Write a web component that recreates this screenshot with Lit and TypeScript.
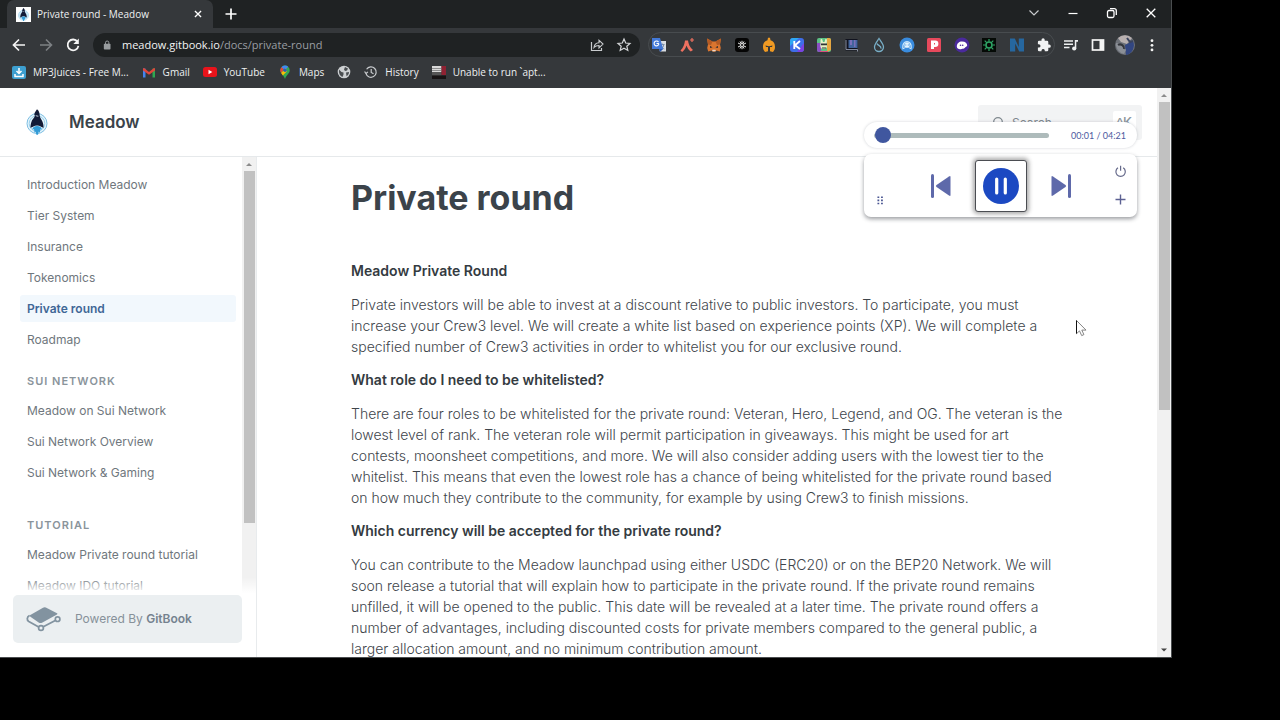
import { LitElement, html, css, svg, TemplateResult } from "lit";
import { customElement, property, state } from "lit/decorators.js";
import { classMap } from "lit/directives/class-map.js";

const reset = css`
  * { box-sizing: border-box; }
  button { appearance: none; border: 0; padding: 0; margin: 0; background: none; color: inherit; font: inherit; display: grid; place-items: center; cursor: pointer; }
  a { color: inherit; text-decoration: none; }
  svg { display: block; flex: none; }
  ul { list-style: none; margin: 0; padding: 0; }
`;

const penguin = (size: number) => html`<svg width=${size} height=${size} viewBox="0 0 26 26" aria-hidden="true">
  <circle cx="13" cy="14.5" r="10" fill="#e3f3fb" stroke="#7dbfe3" stroke-width="1"/>
  <circle cx="13" cy="14.5" r="7.8" fill="none" stroke="#9bd0ec" stroke-width="1"/>
  <path d="M13 .2c-.8 1-1.600 2.200-2.400 3.700L10.300 6l.7.6C10.400 9 8 10.600 7.300 13.200c-.6 2.100-.9 4.300-.9 5.600 2.200-.4 3.600-2.400 6.700-2.400 3 0 4.300 2 6.400 2.400.2-2-.3-4-.9-5.800-.7-2-2.500-3.700-2.900-6.300 0-2.300-.5-5-2.700-6.500z" fill="#121a36"/>
  <path d="M11.200 6.700c1.500-.5 2.500-.4 3.700.2l-.9.5c-1 .1-1.800 0-2.800-.7z" fill="#dfeef7"/>
  <path d="M8.300 20.500c.3-2.300 2-3.600 4.800-3.600s4.400 1.300 4.800 3.600l-1.500-.3-.7 3.500-1-1.200-.7 3.300h-1.600l-.7-3.300-1 1.200-.7-3.500z" fill="#329bd6"/>
</svg>`;

const icon = (body: TemplateResult, size = 16, box = 16) =>
  html`<svg width=${size} height=${size} viewBox="0 0 ${box} ${box}" fill="none" aria-hidden="true">${body}</svg>`;

const extensions: { name: string; art: TemplateResult }[] = [
  { name: "Translate", art: svg`<path d="M5.500 4H15v10.500H9z" fill="#d9dde3"/><path d="M9 7.500h4.500M11.300 6.500v1M10 12c1.700-1 2.500-2.500 2.700-4.300M10.300 9c.7 1.500 1.500 2.300 3 3" stroke="#7b8ea8"/><path d="M1 1h8l3.200 11H1z" fill="#4379d8"/><path d="M7.900 6.500H5.500M7.500 5.100a2.400 2.400 0 1 0 .4 1.600" stroke="#fff" stroke-width="1.100"/><path d="M8 12l1 3 3.200-3z" fill="#2757b0"/>` },
  { name: "Argent", art: svg`<path d="M1.500 13.500C4.500 10.700 5.500 7 6 3.500h3c.4 3.500 2 7 5 9.500l-2.200 1.500C9.500 13 8.200 10.500 7.500 8.500 6.800 11 5.500 13 3.200 15z" fill="#ef7160"/><path d="M13 1v4M11 3h4" stroke="#ef7160" stroke-width="1.200"/>` },
  { name: "MetaMask", art: svg`<path d="M1 1.500l5.500 3h3l5.500-3-1 6 .8 3.500-1 3.500-3.300-1-1.500 1.300H7l-1.500-1.300-3.300 1-1-3.500L2 7.500z" fill="#d9752f"/><path d="M1 1.500l5.500 3L5 8 2 7.500zM15 1.500l-5.500 3L11 8l3-.5z" fill="#b25a24"/><path d="M4 9l2.500 1.200L4.200 11zM12 9l-2.500 1.200 2.300.8z" fill="#1e2430"/><path d="M6.500 12.700h3l.3 1.500H6.200z" fill="#e8d9cd"/>` },
  { name: "Kraken", art: svg`<rect x="1" y="1" width="14" height="14" rx="3" fill="#050505"/><path d="M8 3.800v8.400M4 6l8 4M4 10l8-4M6 4.500l4 7M10 4.500l-4 7" stroke="#e9e9e9" stroke-width="1"/><circle cx="8" cy="8" r="1.500" fill="#050505" stroke="#eee" stroke-width=".8"/>` },
  { name: "Spartan", art: svg`<path d="M7 .8h2l.5 2.400C12.800 4 14 7 14 10c0 2-.7 3.500-2 5l-3-.8V10h2l.5-1.500-3.500.8-3.500-.8L5 10h2v4.200L4 15c-1.300-1.500-2-3-2-5 0-3 1.200-6 4.500-6.800z" fill="#f09a23"/>` },
  { name: "Keplr", art: svg`<rect x="1" y="1" width="14" height="14" rx="3" fill="#3f6de8"/><path d="M8 15h4a3 3 0 0 0 3-3V6z" fill="#7c42e0"/><path d="M1 4a3 3 0 0 1 3-3h6L1 9z" fill="#2fa8f4"/><path d="M5.300 4v8M11 4L6 8.200 11 12" stroke="#fff" stroke-width="1.900"/>` },
  { name: "Rabby", art: svg`<rect x="1" y="1" width="14" height="14" rx="2" fill="#5cc184"/><path d="M1 6h4v9H3a2 2 0 0 1-2-2z" fill="#8a4fc4"/><path d="M11 1h2a2 2 0 0 1 2 2v10l-4 2z" fill="#e6a742"/><path d="M4.500 2.500l1.500-.8 1 3.300h1.500l1-3.300 1.500.8-.3 4.500c1 3-.5 5-3 5s-4-2-3.200-5z" fill="#e7f0c8"/><path d="M5 6.500h6v1.800H5zM6 10.500h4v1H6z" fill="#2e3534"/><path d="M4 14h8v1H4z" fill="#dd4e7c"/>` },
  { name: "Wallet", art: svg`<path d="M1.500 2h12v11.500h-12z" fill="#11131f"/><path d="M4.500 3h9v8h-9z" fill="#42649c"/><path d="M6 3h2v5H6zM10 3h1.500v7H10z" fill="#7a6fb8"/><path d="M2 3v9.500h11.500v2" stroke="#a2a9bd" stroke-width=".8"/>` },
  { name: "Sui", art: svg`<path d="M8 1.500C6 4.500 3.500 7 3.500 10a4.500 4.500 0 0 0 9 0C12.500 7 10 4.500 8 1.500z" stroke="#78aec6" stroke-width="1.300"/><path d="M6 6.500c.5 2.200 4.500 1.800 4 5.200" stroke="#78aec6" stroke-width="1.300"/>` },
  { name: "Martian", art: svg`<circle cx="8" cy="8" r="7.500" fill="#398bdd"/><path d="M3.800 11.500C2.500 2.500 13.500 2.500 12.200 11.500" stroke="#c9e6fb" stroke-width="1.300"/><path d="M5.300 8.500c0-4 5.400-4 5.400 0 0 2-1.200 2.300-2.700 2.300s-2.700-.3-2.700-2.300z" fill="#e3f4ff"/><path d="M6.300 8h1M8.800 8h1" stroke="#398bdd"/><path d="M3.500 12l2.500-1.300M12.500 12L10 10.700" stroke="#c9e6fb"/>` },
  { name: "Pontem", art: svg`<rect x="1" y="1" width="14" height="14" rx="1.500" fill="#e6495c"/><path d="M5 3.500h4.200a3.200 3.200 0 0 1 0 6.400H8V12H5zM8 6v1.500h1V6z" fill="#fff" fill-rule="evenodd"/>` },
  { name: "Phantom", art: svg`<circle cx="8" cy="8" r="7.500" fill="#4a2a9c"/><path d="M2.800 9.500c0-3 2.200-5 5.200-5 3.500 0 5.200 2 5.200 4-.3 1.500-1.700 1.300-2.500 2.500-1 1.300-2.400.3-3 .9-1.800.8-4.900.2-4.900-2.400z" fill="#fff"/><circle cx="6.500" cy="8.200" r=".8" fill="#4a2a9c"/><circle cx="8.700" cy="8.200" r=".8" fill="#4a2a9c"/>` },
  { name: "Virus", art: svg`<path d="M1 1h14v14H1z" fill="#050a06"/><circle cx="8" cy="8" r="3" stroke="#2fa566" stroke-width="1.600"/><path d="M8 2v2.500M8 11.500V14M2 8h2.500M11.500 8H14M3.700 3.700l2 2M10.300 10.300l2 2M12.300 3.700l-2 2M5.700 10.300l-2 2" stroke="#2fa566" stroke-width="1.200"/>` },
  { name: "Nami", art: svg`<path d="M1 1.500h4.800l4 8.500V1.500H15v13h-4.800L6.200 6.500v8H1z" fill="#26679f"/>` },
  { name: "Extensions", art: svg`<path d="M13.200 7.600h-.9V5a1.300 1.300 0 0 0-1.300-1.300H8.700v-.9a1.600 1.600 0 0 0-3.200 0v.9H3.200A1.300 1.300 0 0 0 1.900 5v2.200h.9a1.700 1.700 0 0 1 0 3.400h-.9V13a1.300 1.300 0 0 0 1.300 1.300h2.300v-.9a1.700 1.700 0 0 1 3.300 0v.9H11a1.300 1.300 0 0 0 1.300-1.300v-2.200h.9a1.600 1.600 0 0 0 0-3.200z" fill="#f1f2f3"/>` },
];

@customElement("browser-chrome")
class BrowserChrome extends LitElement {
  static styles = [reset, css`
    :host { display: block; color: #eef0f1; background: #35383b; font-family: "Open Sans", "Noto Sans", sans-serif; }
    .tabs { display: flex; align-items: stretch; height: 28px; background: #1f2223; padding-left: 7px; }
    .tab { display: flex; align-items: center; width: 206px; padding: 0 8px 0 9px; gap: 6px; border-radius: 7px 7px 0 0; background: #35383b; font-size: 10px; }
    .favicon { display: grid; place-items: center; width: 15px; height: 15px; background: #fff; }
    .tab-title { flex: 1; white-space: nowrap; overflow: hidden; }
    .new-tab { width: 36px; }
    .window-controls { display: flex; margin-left: auto; padding-right: 1px; }
    .window-controls button { width: 39px; height: 25px; }
    .toolbar { display: flex; align-items: center; height: 33px; padding: 0 6px 0 5px; }
    .tool { width: 27px; height: 24px; }
    .omnibox { flex: 1; min-width: 0; display: flex; align-items: center; gap: 9px; height: 24px; margin: 0 8px 0 7px; padding: 0 7px 0 10px; border-radius: 12px; background: #1f2223; }
    .url { flex: 1; font-size: 11px; color: #9a9ea2; white-space: nowrap; overflow: hidden; }
    .host { color: #f3f4f4; font-weight: 500; }
    .omnibox button { width: 18px; }
    .extensions { display: flex; align-items: center; justify-content: space-between; width: 407px; height: 25px; margin-right: 2px; padding: 0 2px; border: 1px solid #484c4f; border-radius: 13px; }
    .bookmarks { display: flex; align-items: center; gap: 13px; height: 27px; padding: 0 0 5px 12px; font-size: 10px; }
    .bookmark { display: flex; align-items: center; gap: 7px; white-space: nowrap; }
  `];

  private bookmarks = [
    { text: "MP3Juices - Free M...", art: svg`<rect x="0" y="1" width="14" height="13" rx="2" fill="#3d9fd0"/><path d="M7 3v5M4.500 6L7 8.500 9.500 6M3 9v2.500h8V9" stroke="#fff" stroke-width="1.500"/>` },
    { text: "Gmail", art: svg`<path d="M1 12.500V3.500h2.500v9z" fill="#4583ed"/><path d="M10.500 12.500v-9H13v9z" fill="#2fa751"/><path d="M1 3.500l1-.5 5 4 5-4 1 .5v2L7 9.700 1 5.500z" fill="#e2453a"/>` },
    { text: "YouTube", art: svg`<rect x="0" y="2" width="14" height="10" rx="2.500" fill="#e8131b"/><path d="M5.500 4.800v4.400L9.300 7z" fill="#fff"/>` },
    { text: "Maps", art: svg`<path d="M7 .5a4.700 4.700 0 0 0-4.700 4.700C2.300 8.500 5.500 9.500 7 14c1.500-4.500 4.700-5.500 4.700-8.800A4.700 4.700 0 0 0 7 .5z" fill="#34a853"/><path d="M3.400 2.200L7 5.200l3.200-3.500A4.700 4.700 0 0 0 3.400 2.200z" fill="#4285f4"/><path d="M3.400 2.200L5.700 4.200 3.200 7.900A4.800 4.800 0 0 1 3.400 2.200z" fill="#ea4335"/><path d="M3.200 7.900l4.600-4.800 1 3.500-4 4z" fill="#fbbc04"/><circle cx="7" cy="5.200" r="1.700" fill="#2c5fb3"/>` },
    { text: "", art: svg`<circle cx="7" cy="7" r="6.300" fill="#cdd0d2"/><path d="M2 4.500l2.500 2.500 2 .5v2L5.500 12C3 11 1.500 8.500 2 4.500zM8 2l3 1.500-1 2-2 .5-1-1.500zM9 7.500l3-.5c0 2-1 3.500-2.500 4.300z" fill="#4a4e51"/>` },
    { text: "History", art: svg`<path d="M2.600 4.300A5.200 5.200 0 1 1 2 8.600M.6 6.500L2 8.500l1.900-1.600M7.200 4v3.400l2.300 1.400" stroke="#c9cccf" stroke-width="1.200"/>` },
    { text: "Unable to run `apt...", art: svg`<path d="M0 1h9.500v6H0z" fill="#d8d8d8"/><path d="M0 3h9.500v1H0zM0 5h9.500v1H0z" fill="#8d8d8d"/><path d="M0 7h9.500v3.500H0z" fill="#555"/><path d="M9.500 1H14v9H9.500z" fill="#8f2233"/><path d="M0 10.500h14V14H0z" fill="#171314"/>` },
  ];

  render() {
    return html`
      <div class="tabs">
        <div class="tab">
          <span class="favicon">${penguin(13)}</span>
          <span class="tab-title">Private round - Meadow</span>
          <button aria-label="Close tab">${icon(svg`<path d="M4.500 4.500l7 7M11.500 4.500l-7 7" stroke="#fff" stroke-width="1.500"/>`, 14)}</button>
        </div>
        <button class="new-tab" aria-label="New tab">${icon(svg`<path d="M8 2.500v11M2.500 8h11" stroke="#fff" stroke-width="1.700"/>`)}</button>
        <div class="window-controls">
          <button aria-label="Search tabs">${icon(svg`<path d="M3.500 5.500L8 10l4.500-4.500" stroke="#c8cbcd" stroke-width="1.200"/>`)}</button>
          <button aria-label="Minimize">${icon(svg`<path d="M3.500 8.500h9" stroke="#fff" stroke-width="1.200"/>`)}</button>
          <button aria-label="Restore">${icon(svg`<rect x="3.500" y="5.500" width="6.500" height="7" rx="1.500" stroke="#fff" stroke-width="1.300"/><path d="M6 3.700h4.300a2 2 0 0 1 2 2V10" stroke="#fff" stroke-width="1.300"/>`)}</button>
          <button aria-label="Close">${icon(svg`<path d="M3.700 3.700l8.600 8.600M12.300 3.700l-8.600 8.600" stroke="#fff" stroke-width="1.300"/>`)}</button>
        </div>
      </div>
      <div class="toolbar">
        <button class="tool" aria-label="Back">${icon(svg`<path d="M14 8H3M8 2.500L2.500 8 8 13.500" stroke="#f5f5f5" stroke-width="1.700"/>`)}</button>
        <button class="tool" aria-label="Forward">${icon(svg`<path d="M2 8h11M8 2.500L13.500 8 8 13.500" stroke="#7d8184" stroke-width="1.600"/>`)}</button>
        <button class="tool" aria-label="Reload">${icon(svg`<path d="M12.500 4.800A5.400 5.400 0 1 0 13.400 8.800" stroke="#f5f5f5" stroke-width="1.800"/><path d="M13.800 1.500v5.500H8.300z" fill="#f5f5f5"/>`)}</button>
        <div class="omnibox">
          ${icon(svg`<rect x="1" y="4.500" width="8" height="7" rx="1" fill="#989c9f"/><path d="M3 5V3.200a2 2 0 0 1 4 0V5" stroke="#989c9f" stroke-width="1.200"/>`, 10, 12)}
          <span class="url"><span class="host">meadow.gitbook.io</span>/docs/private-round</span>
          <button aria-label="Share">${icon(svg`<path d="M2.500 5v8.500h10V11" stroke="#c9ccce" stroke-width="1.200"/><path d="M5 10.500c.3-3 2-4.700 5-4.800V3.200l4 3.900-4 3.800V8.500c-2.200 0-3.700.5-5 2z" stroke="#c9ccce" stroke-width="1.100"/>`)}</button>
          <button aria-label="Bookmark this page">${icon(svg`<path d="M8 2l1.700 4 4.300.4-3.200 2.800 1 4.200L8 11.200l-3.800 2.200 1-4.200L2 6.400 6.300 6z" stroke="#d5d7d9" stroke-width="1.200"/>`)}</button>
        </div>
        <div class="extensions">
          ${extensions.map((e) => html`<button aria-label=${e.name}>${icon(e.art)}</button>`)}
        </div>
        <button class="tool" aria-label="Media">${icon(svg`<path d="M1 4h9M1 7.300h9M1 10.600h5.500" stroke="#eef0f1" stroke-width="1.500"/><path d="M11.800 3H15v1.800h-1.700v6.700h-1.500z" fill="#eef0f1"/><circle cx="11.200" cy="11.500" r="2.100" fill="#eef0f1"/>`)}</button>
        <button class="tool" aria-label="Side panel">${icon(svg`<rect x="2.500" y="3" width="11" height="10" stroke="#f5f5f5" stroke-width="1.700"/><path d="M9.500 3h4v10h-4z" fill="#f5f5f5"/>`)}</button>
        <button class="tool" aria-label="Profile">${icon(svg`<circle cx="10" cy="10" r="10" fill="#6d7178"/><path d="M3 3a10 10 0 0 1 14 0l-5 6-6-2z" fill="#b8b0b0"/><path d="M10 10l8-4a10 10 0 0 1-7 14z" fill="#324681"/><path d="M1 8l6 1 4 6-2 4A10 10 0 0 1 1 8z" fill="#8b8f96"/><path d="M3 10a4 4 0 0 1 6 4" stroke="#33363c" stroke-width="2"/><path d="M12 3l3 4 3-1" stroke="#39435e" stroke-width="2"/>`, 20, 20)}</button>
        <button class="tool" aria-label="Menu">${icon(svg`<circle cx="8" cy="3.700" r="1.400" fill="#f5f5f5"/><circle cx="8" cy="8.300" r="1.400" fill="#f5f5f5"/><circle cx="8" cy="12.900" r="1.400" fill="#f5f5f5"/>`)}</button>
      </div>
      <nav class="bookmarks" aria-label="Bookmarks">
        ${this.bookmarks.map((b) => html`<a class="bookmark" href="#" aria-label=${b.text || "Website"}>${icon(b.art, 14, 14)}${b.text ? html`<span>${b.text}</span>` : ""}</a>`)}
      </nav>`;
  }
}

@customElement("scroll-rail")
class ScrollRail extends LitElement {
  @property({ type: Number }) share = 50;
  @property({ type: Boolean }) down = false;
  static styles = [reset, css`
    :host { display: flex; flex-direction: column; align-items: center; width: 14px; flex: none; background: #f1f1f1; }
    .arrow { display: grid; place-items: center; height: 14px; }
    .track { flex: 1; width: 11px; }
    .thumb { background: #c1c1c1; }
  `];
  render() {
    return html`
      <span class="arrow">${icon(svg`<path d="M1 6l3-3 3 3z" fill="#8b8b8b"/>`, 8, 8)}</span>
      <div class="track"><div class="thumb" style="height:${this.share}%"></div></div>
      ${this.down ? html`<span class="arrow">${icon(svg`<path d="M1 2.500l3 3 3-3z" fill="#444"/>`, 8, 8)}</span>` : ""}`;
  }
}

@customElement("docs-sidebar")
class DocsSidebar extends LitElement {
  @state() private current = "Private round";
  static styles = [reset, css`
    :host { position: relative; display: flex; flex-direction: column; width: 257px; flex: none; border-right: 1px solid #e8ebed; color: #6f777d; font-size: 12px; line-height: 18px; }
    .scroller { position: relative; flex: 1; min-height: 0; display: flex; justify-content: space-between; overflow: hidden; }
    .links { padding: 14px 0 0 20px; width: 236px; }
    .link { display: flex; align-items: center; height: 27px; margin-bottom: 4px; padding-left: 7px; border-radius: 3px; }
    .link.active { background: #f2f8fd; color: #3f6796; font-weight: 600; }
    .heading { margin: 0; padding: 16px 0 8px 7px; font-size: 11px; line-height: 16px; font-weight: 600; color: #8a949b; letter-spacing: 1px; text-transform: uppercase; }
    .group + .group + .group { padding-top: 11px; }
    .fade { position: absolute; left: 0; right: 0; bottom: 0; height: 18px; background: linear-gradient(rgba(255,255,255,0), #fff 90%); }
    .powered { display: flex; align-items: center; gap: 14px; height: 48px; margin: 0 14px 14px 13px; padding-left: 13px; border-radius: 5px; background: #ebeff1; color: #87919a; }
    .powered b { font-weight: 600; color: #75828f; }
  `];

  private groups = [
    { heading: "", links: ["Introduction Meadow", "Tier System", "Insurance", "Tokenomics", "Private round", "Roadmap"] },
    { heading: "Sui Network", links: ["Meadow on Sui Network", "Sui Network Overview", "Sui Network & Gaming"] },
    { heading: "Tutorial", links: ["Meadow Private round tutorial", "Meadow IDO tutorial"] },
  ];

  render() {
    return html`
      <div class="scroller">
        <nav class="links" aria-label="Pages">
          ${this.groups.map((g) => html`<div class="group">
            ${g.heading ? html`<h2 class="heading">${g.heading}</h2>` : ""}
            <ul>${g.links.map((l) => html`<li><a href="#" class=${classMap({ link: true, active: l === this.current })} @click=${() => (this.current = l)}>${l}</a></li>`)}</ul>
          </div>`)}
        </nav>
        <scroll-rail share="83"></scroll-rail>
        <div class="fade"></div>
      </div>
      <a class="powered" href="#">
        <svg width="35" height="26" viewBox="0 0 35 26" fill="none" aria-hidden="true">
          <path d="M3 9.800L17 1.700q1.400-.8 2.800-.1L31 7.300q1 .6 0 1.200L16 16.700q-1.500.8-3 0z" fill="#8293a0"/>
          <path d="M3.500 9.500C.8 10.800.6 14.200 2.800 15.500L12.700 21M17.300 20.800l12-6.300" stroke="#8293a0" stroke-width="1.800"/>
          <circle cx="15" cy="22" r="2.400" stroke="#8293a0" stroke-width="1.700"/>
          <circle cx="31.600" cy="13.200" r="2.300" stroke="#8293a0" stroke-width="1.700"/>
        </svg>
        <span>Powered By <b>GitBook</b></span>
      </a>`;
  }
}

@customElement("docs-article")
class DocsArticle extends LitElement {
  static styles = [reset, css`
    :host { display: block; flex: 1; min-width: 0; overflow: hidden; padding: 18px 92px 0 94px; color: #3e454b; }
    .title { margin: 0 0 40px; font-size: 34px; line-height: 46px; font-weight: 700; color: #3b434a; }
    .text { margin: 0 0 13px; font-size: 14px; line-height: 21px; font-weight: 300; }
    .lead { margin: 0 0 13px; font-size: 14px; line-height: 20px; font-weight: 600; color: #343b41; }
  `];

  private sections = [
    ["Meadow Private Round", "Private investors will be able to invest at a discount relative to public investors. To participate, you must increase your Crew3 level. We will create a white list based on experience points (XP). We will complete a specified number of Crew3 activities in order to whitelist you for our exclusive round."],
    ["What role do I need to be whitelisted?", "There are four roles to be whitelisted for the private round: Veteran, Hero, Legend, and OG. The veteran is the lowest level of rank. The veteran role will permit participation in giveaways. This might be used for art contests, moonsheet competitions, and more. We will also consider adding users with the lowest tier to the whitelist. This means that even the lowest role has a chance of being whitelisted for the private round based on how much they contribute to the community, for example by using Crew3 to finish missions."],
    ["Which currency will be accepted for the private round?", "You can contribute to the Meadow launchpad using either USDC (ERC20) or on the BEP20 Network. We will soon release a tutorial that will explain how to participate in the private round. If the private round remains unfilled, it will be opened to the public. This date will be revealed at a later time. The private round offers a number of advantages, including discounted costs for private members compared to the general public, a larger allocation amount, and no minimum contribution amount."],
  ];

  render() {
    return html`<article>
      <h1 class="title">Private round</h1>
      ${this.sections.map(([lead, text]) => html`<h2 class="lead">${lead}</h2><p class="text">${text}</p>`)}
    </article>`;
  }
}

@customElement("music-widget")
class MusicWidget extends LitElement {
  static styles = [reset, css`
    :host { display: flex; flex-direction: column; gap: 6px; width: 273px; color: #4d5aa0; }
    .seek { display: flex; align-items: center; justify-content: space-between; height: 26px; padding: 0 11px 0 10px; border-radius: 13px; background: #fff; box-shadow: 0 0 3px rgba(40,50,70,.22); font-family: Lato, sans-serif; font-size: 9px; }
    .bar { appearance: none; width: 175px; height: 18px; margin: 0; background: none; }
    .bar::-webkit-slider-runnable-track { height: 5px; border-radius: 3px; background: #aebbbb; }
    .bar::-webkit-slider-thumb { appearance: none; width: 16px; height: 16px; margin-top: -6px; border-radius: 50%; background: #40579f; }
    .deck { display: grid; grid-template-columns: 34px 1fr 34px; height: 63px; border-radius: 7px; background: #fff; box-shadow: 0 2px 4px rgba(30,35,45,.45); }
    .grip { align-self: end; justify-self: center; margin-bottom: 12px; }
    .main { display: flex; align-items: center; justify-content: center; gap: 22px; }
    .play { width: 52px; height: 52px; border: 1px solid #4b4d52; border-radius: 3px; background: #fff; box-shadow: 0 0 4px 2px rgba(40,40,40,.4); }
    .side { display: flex; flex-direction: column; justify-content: space-around; align-items: center; padding: 4px 0; }
  `];
  render() {
    return html`
      <div class="seek">
        <input class="bar" type="range" min="0" max="261" value="1" aria-label="Position" />
        <span>00:01 / 04:21</span>
      </div>
      <div class="deck">
        <button class="grip" aria-label="Move">${icon(svg`<path d="M1.500 .5v9M5.500 .5v9" stroke="#4a5692" stroke-width="2" stroke-dasharray="1.800 1.700"/>`, 9, 10)}</button>
        <div class="main">
          <button aria-label="Previous">${icon(svg`<path d="M3.500 1.500v21" stroke="#5e69aa" stroke-width="3" stroke-linecap="round"/><path d="M21.500 3v18q0 1.500-1.500.5L7.500 13q-1.300-1 0-2L20 2.500Q21.500 1.500 21.500 3z" fill="#5e69aa"/>`, 24, 24)}</button>
          <button class="play" aria-label="Pause">${icon(svg`<circle cx="18" cy="18" r="18" fill="#1c49c2"/><path d="M13.700 11v14M22.300 11v14" stroke="#fff" stroke-width="3.200" stroke-linecap="round"/>`, 36, 36)}</button>
          <button aria-label="Next">${icon(svg`<path d="M20.500 1.500v21" stroke="#5e69aa" stroke-width="3" stroke-linecap="round"/><path d="M2.500 3v18q0 1.500 1.500.5L16.500 13q1.300-1 0-2L4 2.500Q2.500 1.500 2.500 3z" fill="#5e69aa"/>`, 24, 24)}</button>
        </div>
        <div class="side">
          <button aria-label="Power">${icon(svg`<path d="M4 2.800a4.700 4.700 0 1 0 5.200 0M6.600 .8v5" stroke="#65698a" stroke-width="1.200"/>`, 13, 13)}</button>
          <button aria-label="Add">${icon(svg`<path d="M6.500 1.500v10M1.500 6.500h10" stroke="#5c6192" stroke-width="1.400"/>`, 13, 13)}</button>
        </div>
      </div>`;
  }
}

@customElement("app-root")
class AppRoot extends LitElement {
  static styles = [reset, css`
    :host { display: block; height: 100vh; background: #000; font-family: Inter, "Liberation Sans", sans-serif; }
    .screen { height: 100%; padding: 0 108px 62px 0; }
    .window { position: relative; display: flex; flex-direction: column; height: 100%; border: solid #4a4d4f; border-width: 0 1px 1px 0; }
    .page { flex: 1; min-height: 0; display: flex; background: #fff; }
    .site { flex: 1; min-width: 0; display: flex; flex-direction: column; }
    .header { display: flex; align-items: center; height: 69px; padding: 0 15px 0 24px; border-bottom: 1px solid #e6e9eb; }
    .brand { display: flex; align-items: center; gap: 19px; font-size: 17px; font-weight: 600; color: #3b434a; }
    .search { display: flex; align-items: center; gap: 7px; width: 164px; height: 35px; margin-left: auto; padding: 0 6px 0 14px; border-radius: 3px; background: #f2f3f4; color: #8b959c; }
    .field { flex: 1; min-width: 0; padding: 0; border: 0; outline: 0; background: none; font: 12px Inter, sans-serif; color: inherit; }
    .field::placeholder { color: #7f888e; }
    .keys { padding: 2px 4px; border-radius: 2px; background: #fff; font: 500 13px/18px Inter, sans-serif; }
    .body { flex: 1; min-height: 0; display: flex; }
    .widget { position: absolute; top: 122px; right: 34px; }
    .pointer { position: absolute; left: 1075px; top: 319px; }
  `];
  render() {
    return html`<div class="screen"><div class="window">
      <browser-chrome></browser-chrome>
      <div class="page">
        <div class="site">
          <header class="header">
            <a class="brand" href="#">${penguin(26)}<span>Meadow</span></a>
            <label class="search">
              ${icon(svg`<circle cx="6" cy="6" r="4.300" stroke="#7f888e" stroke-width="1.300"/><path d="M9.300 9.300L12.500 12.500" stroke="#7f888e" stroke-width="1.300"/>`, 13, 13)}
              <input class="field" type="text" placeholder="Search..." aria-label="Search" />
              <kbd class="keys">^K</kbd>
            </label>
          </header>
          <div class="body">
            <docs-sidebar></docs-sidebar>
            <docs-article></docs-article>
          </div>
        </div>
        <scroll-rail share="57" down></scroll-rail>
      </div>
      <music-widget class="widget"></music-widget>
      <svg class="pointer" width="13" height="19" viewBox="0 0 13 19" aria-hidden="true"><path d="M1.500 1.500v13.200l3-2.800 2.200 4.700 2.200-1-2.100-4.500h4.200z" fill="#fff" stroke="#777" stroke-width=".9"/><path d="M1.500 1.500v13" stroke="#111"/></svg>
    </div></div>`;
  }
}
